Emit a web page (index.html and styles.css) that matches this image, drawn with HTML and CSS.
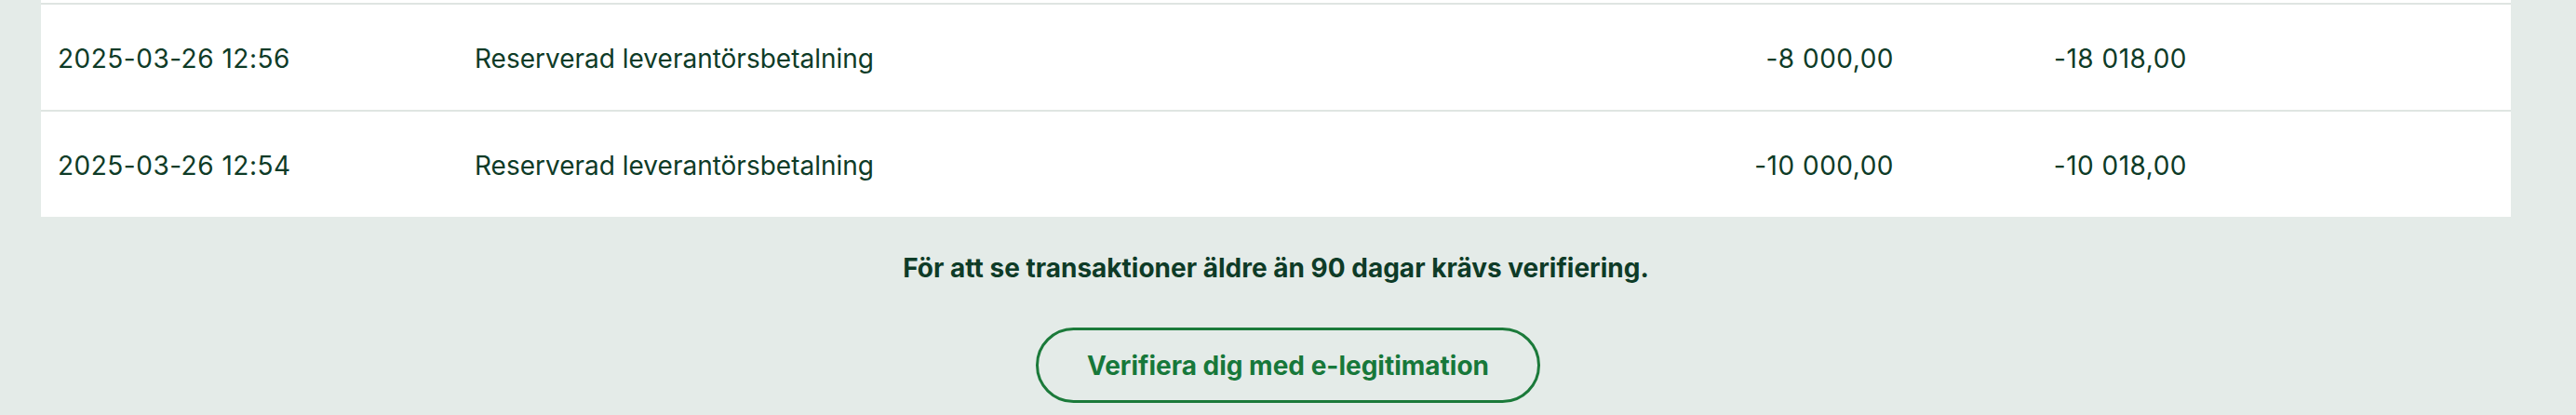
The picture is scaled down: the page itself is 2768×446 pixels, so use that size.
FILE: index.html
```html
<!doctype html>
<html>
<head>
<meta charset="utf-8">
<title>Transaktioner</title>
<link rel="stylesheet" href="styles.css">
</head>
<body>
	<div class="card">
		<div class="row">
			<span class="date">2025-03-26 12:56</span>
			<span class="text">Reserverad leverantörsbetalning</span>
			<span class="num">-8 000,00</span>
			<span class="num">-18 018,00</span>
			<span></span>
		</div>
		<div class="row">
			<span class="date">2025-03-26 12:54</span>
			<span class="text">Reserverad leverantörsbetalning</span>
			<span class="num">-10 000,00</span>
			<span class="num">-10 018,00</span>
			<span></span>
		</div>
	</div>
	<p class="notice">För att se transaktioner äldre än 90 dagar krävs verifiering.</p>
	<div class="action">
		<button type="button" class="btn">Verifiera dig med e-legitimation</button>
	</div>
</body>
</html>
```
FILE: styles.css
```css
*{ margin:0; padding:0; box-sizing:border-box; }
html,body{ background:#e4ebe8; }
body{ font-family:Inter, "Noto Sans", sans-serif; font-size:28px; color:#0e3b27; line-height:34px; }

.card{ margin:0 70px 0 44px; padding-top:3px; background:#fff; }
.row{ display:grid; grid-template-columns:448px 1fr 200px 315px 330px; align-items:center; height:115px; padding:2px 18px 0; border-top:2px solid #dfe5e2; }
.date,.num{ letter-spacing:0.5px; }
.num{ text-align:right; }

.notice{ margin:38px 70px 0 44px; text-align:center; font-weight:700; }

.action{ display:flex; justify-content:center; margin-top:47px; }
.btn{ display:flex; align-items:center; justify-content:center; width:542px; height:81px; border:3px solid #1b7a3a; border-radius:41px; background:transparent; font:700 28px/34px Inter, "Noto Sans", sans-serif; color:#17783a; cursor:pointer; }
```
